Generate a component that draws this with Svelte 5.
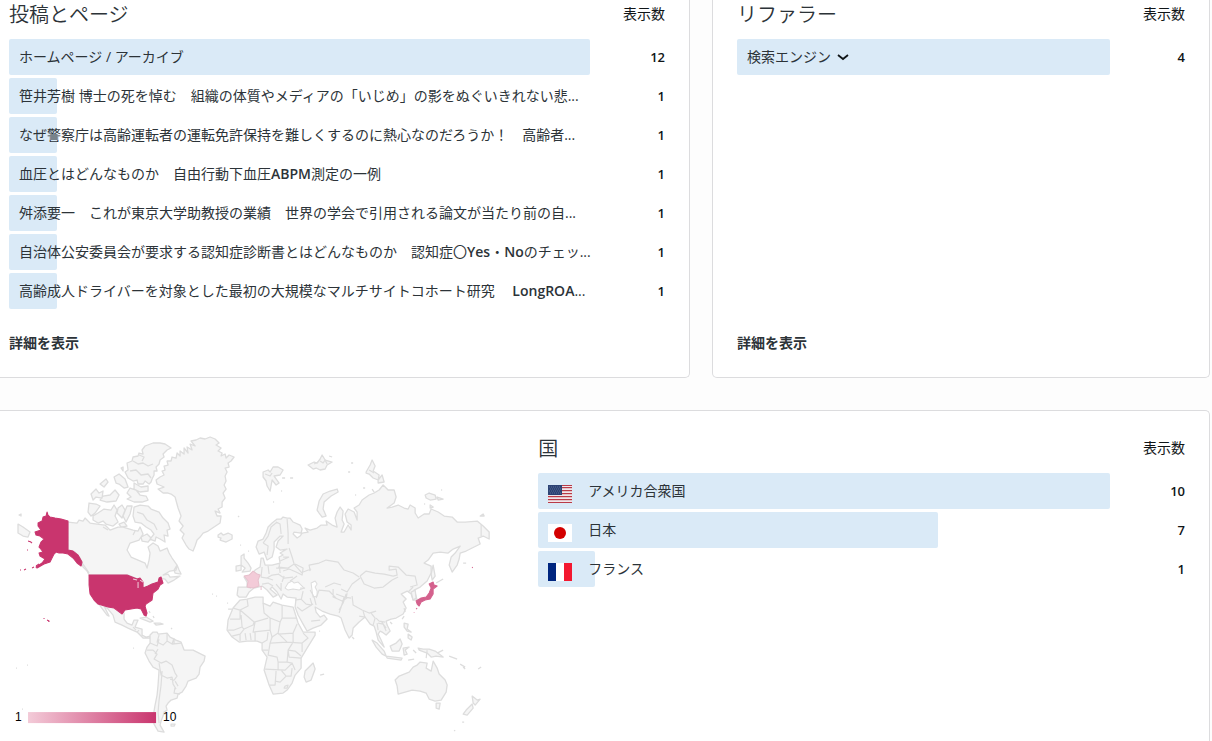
<script lang="ts">
  interface Row {
    label: string
    value: number
    flag?: string
  }

  const posts: Row[] = [
    { label: 'ホームページ / アーカイブ', value: 12 },
    { label: '笹井芳樹 博士の死を悼む　組織の体質やメディアの「いじめ」の影をぬぐいきれない悲...', value: 1 },
    { label: 'なぜ警察庁は高齢運転者の運転免許保持を難しくするのに熱心なのだろうか！　高齢者...', value: 1 },
    { label: '血圧とはどんなものか　自由行動下血圧ABPM測定の一例', value: 1 },
    { label: '舛添要一　これが東京大学助教授の業績　世界の学会で引用される論文が当たり前の自...', value: 1 },
    { label: '自治体公安委員会が要求する認知症診断書とはどんなものか　認知症〇Yes・Noのチェッ...', value: 1 },
    { label: '高齢成人ドライバーを対象とした最初の大規模なマルチサイトコホート研究　 LongROA...', value: 1 },
  ]

  const referrers: Row[] = [{ label: '検索エンジン', value: 4 }]

  const countries: Row[] = [
    { label: 'アメリカ合衆国', value: 10, flag: 'us' },
    { label: '日本', value: 7, flag: 'jp' },
    { label: 'フランス', value: 1, flag: 'fr' },
  ]

  const stripes = [0, 1, 2, 3, 4, 5, 6]

  // landmasses without views
  const land = [
    // Greenland, Iceland
    'M156 480L160 477 164 475 162 471 165 470 164 466 168 465 167 461 171 461 172 457 176 458 177 453 180 456 180 451 184 454 184 448 188 453 187 447 192 450 190 444 195 446 191 441 196 440 200 438 205 439 210 437 215 439 219 443 216 445 221 448 218 451 222 453 221 456 225 454 226 458 229 455 234 457 231 461 228 463 229 467 225 468 227 472 225 476 226 481 224 485 226 489 223 493 225 498 222 502 222 507 218 509 220 513 215 511 217 516 221 516 220 523 214 527 208 531 203 533 200 537 197 540 195 546 193 551 189 549 186 545 182 538 184 534 180 530 183 526 179 521 181 516 178 508 175 497 171 494 168 493 163 493 158 489 164 487 157 484z',
    'M218 535l3-2 2 2 5-2 4 2 0 4-6 3-6-2 1-2-3-1z',
    // Ellesmere, Devon and Axel Heiberg
    'M171 448l-6-4-5-1-7 0-8 3-3 4 1 4-4-1-1 3-5 1-1 4-5 2 1 7-3 2 3 6 5 3 4-1 1 4 5 0 2-3 4 3 2-2 1-3 2-4 0-4 3 0-1-4 3-3 1-4 4-3-1-3 4-4z',
    'M133 461l5 3 5-1 5 3 5-2M130 471l6-1 5 5 7-1 3 4M139 455l5 2-2 4',
    'M130 488l6 2 4 5 6 1 2 4-6 2-8 0-7-3 4-2-4-4zM114 477l5-3 6 5 3 8-4 1-5-4-3-1zM91 494l5-5 3 4 4-2-1 7-6-1-3 3zM100 484l6-5 2 3-4 5zM103 496l7-1 5-5 4 5-3 6-9 1-7-2zM121 468l2-1 0 4zM134 483l7 4 7-1 0 5-8 1-6-3z',
    // Banks, Victoria, Prince of Wales, Baffin
    'M89 503l7 1 4 2-5 7-4 3-3-4zM93 516l5-3 6-4 7 1 3-5 3 5-2 6 3 6-5 4-7-2-3-3-5 2-5-3zM118 508l4-3 3 5-3 8-5-5zM127 506l5 0-2 8-4 8-3-6zM119 524l5-2 3 4-6 1zM134 507l6-2 8 1 3 3 8 3 4 6 5 5 2 6-3 1 1 6-4-1 1 7-5-3-4-2-1 4-5-2 4-5-3-4-5-3-5-4-6-1-2-6zM137 512l6 2 4 6 7 4 3 6M141 537l6-3 4 4-3 4-6-1z',
    // Canada
    'M68 522L77 523 79 520 83 521 85 518 90 523 97 524 105 525 110 530 118 527 123 527 133 530 138 531 140 527 143 534 139 540 130 543 127 550 131 557 138 560 145 563 147 568 149 560 150 553 148 547 153 543 158 546 160 551 167 548 169 553 172 558 177 565 176 570 170 571 163 575 168 574 170 577 180 576 174 580 168 583 165 579 160 578 158 583 152 584 143 588 142 582 138 579 128 575 89 575 87 571 83 567 80 558 75 552 68 550zM174 570l3-5 2 5 2 4-6-1z',
    'M80 560l5 7 4 6M103 527l5 3M135 531l-2 4',
    // Mexico and Central America
    'M98 603L110 606 116 607 120 610 124 613 124 619 127 623 132 625 134 620 138 620 135 627 142 629 142 635 146 637 150 636 150 638 143 638 137 632 128 628 122 625 115 622 113 615 108 609 104 606 109 616 107 615 101 607z',
    'M140 618l6-1 7 4-3 1zM154 623l6 0 3 1-7 1zM149 611l1 2M153 616l1 2M171 628l1 1',
    // South America
    'M150 635L153 632 157 632 158 634 167 633 170 637 176 640 181 642 184 650 193 650 199 653 205 656 204 661 200 667 199 674 196 678 188 681 186 686 182 692 178 694 177 698 171 700 168 703 166 706 167 710 164 712 163 716 161 721 160 725 164 732 158 731 154 724 153 717 155 705 157 695 158 685 159 670 153 667 149 661 145 653 147 647 150 643zM171 724l4 0-1 2-3 0z',
    // Europe and Asia
    'M256 547L258 541 263 539 266 533 268 527 272 523 277 519 281 519 283 517 287 518 290 518 293 522 300 525 302 529 301 533 294 532 293 534 297 538 300 536 302 533 308 532 305 528 310 530 317 528 321 525 327 525 326 521 332 525 337 527 335 518 337 512 340 507 343 511 342 520 344 524 341 532 344 532 348 525 351 530 351 525 347 522 345 514 348 509 354 512 357 520 357 512 354 508 359 505 362 500 369 495 374 493 379 490 383 485 388 490 394 490 396 497 394 503 387 508 392 507 398 505 404 508 408 509 410 505 415 508 415 513 418 518 424 514 429 514 431 509 438 512 444 516 452 517 457 522 465 522 477 521 483 526 489 532 489 539 483 536 478 538 480 544 472 548 466 551 460 553 459 559 457 565 452 572 449 565 451 557 455 553 460 546 453 549 448 553 440 552 433 553 428 560 424 563 431 566 431 573 427 581 420 587 414 590 417 600 413 600 411 594 407 591 401 594 404 597 406 599 403 602 406 608 403 614 396 618 391 619 386 621 387 625 390 631 386 635 382 632 380 631 378 634 381 640 384 647 378 640 376 632 374 626 370 624 365 617 359 622 353 628 352 635 349 638 345 630 341 618 338 616 330 614 322 611 315 607 316 612 320 617 324 615 327 619 321 625 313 628 307 631 303 624 298 615 295 607 296 598 287 597 283 594 281 599 277 592 272 587 270 589 277 595 273 597 267 590 262 586 254 588 249 592 246 597 239 597 237 595 238 587 247 587 247 582 244 577 252 574 255 570 260 567 261 558 263 558 265 565 272 565 280 563 279 557 283 555 280 553 287 549 280 550 276 547 278 541 283 536 280 536 274 542 274 549 272 557 267 560 264 552 259 554z',
    // Britain, Ireland
    'M241 556l3-2 0 4 4 5 3 5-1 3-8 1 3-4-4-3zM236 566l5-1 0 5-5 1z',
    // Svalbard, Franz Josef, Novaya Zemlya, northern islands
    'M263 472l5-2 2 2 3-5 5 0 5 3-3 5-6 1 5 7-3 2-4-5-2 11-3-5-1-5-3-4zM308 465l6-3 3 1 3-4 2-4 3 5 7 2-5 3-2 4-5 1-4-2-3 1zM317 510l2-9 4-7 7-3 7-2 1 3-7 4-7 6-1 7 3 7-4 1-3-4zM366 472l4-7 2-5 3 6-2 5 6 4-1 5-5-2-4-4-3-1zM378 480l4-5 2 7-6 1zM425 495l4-2 6 2 1 4-6 1-4-2zM437 497l6 2-5 1zM430 505l3 2-3 1zM480 516l3-2 1 2z',
    'M314 464l4-2M320 461l3 2 2-3 2 4M265 474l5 2 2-3M369 470l5 3',
    'M290 478l3 0M281 491l1 0M273 502l1 0M238 517l1-1M240 545l1 0M248 551l1 0M351 463l2 0M348 472l2 0M355 495l1 0M441 490l1 0M424 504l1 0M363 488l2 0M372 489l2 3M282 478l3 0M329 456l3 1',
    // Africa, Madagascar
    'M240 600L247 599 255 597 263 597 263 603 270 606 273 602 282 605 293 607 298 623 303 632 315 632 315 635 307 648 301 658 301 668 295 675 292 683 287 690 283 693 273 694 269 685 264 670 267 657 262 650 262 643 257 641 247 641 239 642 232 637 227 630 228 620 233 608z',
    'M305 671l3-3 5-5 2 6-4 11-5 2-2-5z',
    // Indonesia, Philippines, Papua
    'M372 640l5 3 7 8 2 5-4-2-6-7zM386 656l8 1 8 1-1 2-14-2zM390 646l6-3 4-4 2 5-3 7-7 0zM403 648l6-1-4 3 2 4-3 1zM404 623l4 1-1 5 4 3-4-1-3-4zM408 634l4 3-1 3-3-2zM418 648l5 1 6 0 6 2 8 6-7-1-5 1-4-4-8-3zM437 653l6-3M449 656l8 3M413 650l3 3M402 619l2-3M390 622l2 2M408 660l6-1',
    // Australia, New Zealand
    'M395 680L399 676 409 672 413 667 417 665 420 662 427 663 426 668 431 671 433 661 437 668 439 674 445 680 447 685 446 692 441 700 435 701 429 699 426 693 420 691 412 690 405 692 398 694 397 686zM436 703l4 0-1 6-3-1zM472 696l5 4 3-1-5 6-2-2zM472 704l-6 6-3 4 4 1 6-7zM460 664l5 3M463 667l2 2M478 669l3-2M462 722l2 0M454 730l1 1',
    // far east islands and Chukotka
    'M18 524l5 3 7 5-2 5-5-1-5-3zM19 515l2-1 0 2zM433 565l2 11-3 4-1-6zM411 592l4-2 1 8-3 2zM404 608l1 4M436 583l7-4M463 563l3 0M133 648l1 0M16 668l1 0M27 665l1 0M22 709l1 0M212 594l1 0M216 596l1 0M227 603l1 0M228 609l4 0M352 637l2 2M319 631l1 0M320 675l4-1',
  ]

  // country borders
  const borders = [
    'M150 643l7 3 2-7M159 635l-2 7 6 3 4-4 0-7M167 641l5 3 2-6M172 644l9-1M147 650l6 0 4 4-3 5 7 4 5-2 6 4 3 8 2 3-3 4-4-1M159 663l2 12 6 3 5-1 1 7 3 5M162 671l-1 14-2 15-1 12 1 11M175 687l-1 6 6 1M174 644l0-5M155 654l3-5M175 681l3 5M133 627l3 3M139 630l-2 2',
    'M247 599L248 606 240 610 233 608M240 610L240 619 230 619M240 610L254 622 253 625 244 629 242 627 241 615M254 622L268 618M263 603L264 613 270 618 280 622 282 618 282 605M282 618L297 618M270 618L270 630 253 632 255 622M280 622L278 633 272 637 270 630M255 632L255 641M268 632L267 640 262 643M250 633L251 640M245 633L246 640M240 634L240 641M244 629L240 634 232 636M228 630L234 630 242 627',
    'M272 637L270 643 287 642 278 633M270 643L268 655 277 657 278 662 287 662 288 650 293 642 293 633 278 634M293 633L297 624M287 642L302 643 308 638 303 633M302 643L302 652M288 650L295 651 301 656M265 669L285 670 292 663 287 662M278 662L278 670M276 671L275 685 269 685M275 681L280 682 286 676 281 670M286 676L291 676 292 668M288 650L289 657 301 658M285 686L288 685 287 688 284 688zM262 650L268 650M292 663L295 670',
    'M263 543l5-7 3-9 6-5M276 522l4 2 1 10M287 519l1 14 0 11M263 543l5 3-1 9M283 557l6 0M289 548l3 9 2 7-6 4-10-1M283 571l6-2 7 3M278 574l6 4 9-1M262 567l-1 10 6 1 5-3 7-1M267 578l6 2M284 576l-2 6M290 581l7-5M268 566l1 8M279 563l1 10M294 564l8 9M289 557l-9 4M247 587l4 1M262 584l6-1 5 3M276 584l5 6M281 583l0 8M276 568l12 0M296 572l6 3 1-7-8-4M303 572l8-3M310 571l-1-6 10-2 7-3 12 2 6 8 9 3 6 4M300 588l5 0M310 590l4 7 2 8M295 600l6-1 5 5 6 1M297 607l5 4 11-7M301 600l2-9M312 605l-2-7M311 621l9-1M316 598l3-8 10 1 7 7M333 589l0 8 9 4 5-3M325 587l9-4 7 2M336 594l8 3-3 10-2 6M344 597l7 1M346 594l-3 9-4 7M341 589l6 3 5-8 8-6M352 596l1 9 9 5 7 3 7-2M347 593l-1 5M363 611l2 7M359 616l6 1',
    'M360 576l6-5 9 2 9 1 9 2 4-1-1-6-7 1 0-4 9 1 8 8 9 1 2 9-7 2M360 576l4 8 10 4 9-1 9-7 6-3M371 613l4 5-2 7M376 618l3 3 6 1M378 623l5 1 3 7M378 630l-1-7M381 621l5 7M413 587l-5 5M481 524l0 12M427 650l-1 8',
  ]

  // inland seas and lakes, painted over the land
  const water = [
    'M285 588l3-5 4-2 2 2 4-1 3 3 3 3-5 2-6-1-5 1z',
    'M311 583l4-2 2 3-2 3 2 4 0 5-4 1-1-6z',
  ]

  const usa = [
    'M89 575h38l5 2 5 2 3-1 3 4 0 6 5-2 4-2 6-2 1-4 2-1 2 6-3 2-2 4-5 4-1 7-6 4-1 2 2 7-1 3-2-1-3-6-4-1-6 1-6 1-3 4-4-3-4-3-6-1-10-3-4-4-4-6-1-9z',
    'M48 515l2 2 5 1 6 1 7 2v29l5 1 5 4 4 7-1 4-4-3-4-5-5-4-5-1-4 0-3-1-2 2-2 4-2 4-6 2-7 4-1-1 6-4 3-4-5-3-1-3 4-1-3-4-1-1 2-5 3-3-4-3-4-1-1-3 6-2-3-4 0-3 4-2 1-4 3-1 1-4z',
    'M28 541l3 1 1 1M27 550l1 0M39 564l-3 2M34 567l-2 1M26 569l-2 1M21 570l-1 0M44 618l0 1M47 620l2 1 0 1',
  ]

  const japan = 'M433 582l1 3 3 1-4 3 0 5-3 5-5 1-4 2-2 4-2-2-1-3 5-3 5-1 3-4 2-5-2-4z'
  const france = 'M244 576l5-1 4-4 4 3 3 1-2 5 1 6-6 2-6-1 1-6zM261 586l0 4'

  function share(row: Row, rows: Row[]) {
    return (row.value / rows[0].value) * 100
  }

  // odd entries are the runs of Latin letters
  function runs(label: string) {
    return label.split(/([A-Za-z]+)/)
  }
</script>

{#snippet header(title: string)}
  <div class="card-header">
    <h2>{title}</h2>
    <span>表示数</span>
  </div>
{/snippet}

{#snippet flagIcon(code: string)}
  <svg class="flag" viewBox="0 0 24 18" aria-hidden="true">
    <rect width="24" height="18" fill="#fff" />
    {#if code === 'us'}
      <rect width="24" height="18" fill="#f1e6ea" />
      {#each stripes as i}
        <rect y={i === 0 ? 0 : i * 3 - 1} width="24" height={i === 0 ? 1 : 1.2} fill="#b93b48" />
      {/each}
      <rect width="14" height="10" fill="#2c4374" />
      <path d="M1 2h12M2 4h12M1 6h12M2 8h12" stroke="#66779e" stroke-width="0.8" stroke-dasharray="1 1" />
    {:else if code === 'jp'}
      <circle cx="12" cy="9" r="6" fill="#d30000" />
    {:else}
      <rect width="8" height="18" fill="#00267f" />
      <rect x="16" width="8" height="18" fill="#f31830" />
    {/if}
  </svg>
{/snippet}

<main>
  <div class="top">
    <section class="card posts">
      {@render header('投稿とページ')}
      <ul>
        {#each posts as row}
          <li>
            <div class="track">
              <div class="bar" style="width: {share(row, posts)}%"></div>
              <a class="label" href="#post">
                <span>{#each runs(row.label) as run, i}{#if i % 2}<b>{run}</b>{:else}{run}{/if}{/each}</span>
              </a>
            </div>
            <span class="value">{row.value}</span>
          </li>
        {/each}
      </ul>
      <a class="more" href="#posts">詳細を表示</a>
    </section>

    <section class="card">
      {@render header('リファラー')}
      <ul>
        {#each referrers as row}
          <li>
            <div class="track">
              <div class="bar" style="width: {share(row, referrers)}%"></div>
              <button class="label" type="button">
                {row.label}
                <svg class="chevron" viewBox="0 0 12 12" aria-hidden="true">
                  <path d="M1 4l5 4 5-4" fill="none" stroke="currentColor" stroke-width="1.8" />
                </svg>
              </button>
            </div>
            <span class="value">{row.value}</span>
          </li>
        {/each}
      </ul>
      <a class="more" href="#referrers">詳細を表示</a>
    </section>
  </div>

  <section class="card countries">
    <svg class="map" viewBox="9 434 529 307" role="img" aria-label="国">
      <defs>
        <linearGradient id="scale">
          <stop offset="0" stop-color="#f3cbd8" />
          <stop offset="1" stop-color="#c9356e" />
        </linearGradient>
      </defs>
      <g class="land">
        {#each land as d}<path {d} />{/each}
      </g>
      <g class="water">
        {#each water as d}<path {d} />{/each}
      </g>
      <g class="borders">
        {#each borders as d}<path {d} />{/each}
      </g>
      <g class="usa">
        {#each usa as d}<path {d} />{/each}
      </g>
      <path class="lakes" d="M133 579l4 1M138 582l0 6M140 580l3 2" />
      <path class="japan" d={japan} />
      <path class="japan" d="M416 609l1-1M414 612l0 0.5M472 567l0.5 1" />
      <path class="france" d={france} />
      <rect x="28" y="712" width="128" height="11" fill="url(#scale)" />
      <text x="15" y="721">1</text>
      <text x="163" y="721">10</text>
    </svg>

    <div>
      {@render header('国')}
      <ul>
        {#each countries as row}
          <li>
            <div class="track">
              <div class="bar" style="width: {share(row, countries)}%"></div>
              <span class="label">
                {@render flagIcon(row.flag ?? '')}
                {row.label}
              </span>
            </div>
            <span class="value">{row.value}</span>
          </li>
        {/each}
      </ul>
    </div>
  </section>
</main>

<style>
  :global(body) {
    margin: 0;
    background: #fdfdfd;
  }

  main {
    display: flex;
    flex-direction: column;
    gap: 32px;
    padding-right: 2px;
    font-family: 'Open Sans', 'Noto Sans CJK JP', sans-serif;
    font-size: 14px;
    line-height: 20px;
    color: #2c3338;
  }

  .top {
    display: grid;
    grid-template-columns: minmax(0, 115fr) minmax(0, 83fr);
    gap: 22px;
  }

  .card {
    display: flex;
    flex-direction: column;
    box-sizing: border-box;
    padding: 0 24px 24px;
    background: #fff;
    border: 1px solid #dcdcde;
    border-top: 0;
    border-radius: 0 0 5px 5px;
  }

  .posts {
    padding-left: 9px;
    border-left: 0;
    border-radius: 0 0 5px 0;
  }

  .countries {
    display: grid;
    grid-template-columns: minmax(0, 45fr) minmax(0, 55fr);
    padding: 23px 24px 0 9px;
    border-top: 1px solid #dcdcde;
    border-bottom: 0;
    border-left: 0;
    border-radius: 0 5px 0 0;
  }

  .card-header {
    display: flex;
    align-items: center;
    justify-content: space-between;
    height: 28px;
    margin-bottom: 11px;
    color: #101517;
  }

  h2 {
    margin: 0;
    padding-top: 2px;
    font-size: 20px;
    font-weight: 350;
    line-height: 28px;
    color: #2c3338;
  }

  ul {
    display: flex;
    flex-direction: column;
    gap: 3px;
    margin: 0;
    padding: 0;
    list-style: none;
  }

  li {
    display: flex;
    align-items: center;
    height: 36px;
  }

  .track {
    display: grid;
    flex: 1;
    min-width: 0;
    height: 36px;
  }

  .bar,
  .label {
    grid-area: 1 / 1;
  }

  .bar {
    background: #daeaf7;
    border-radius: 2px;
  }

  .label {
    display: flex;
    align-items: center;
    z-index: 1;
    min-width: 0;
    padding: 0 0 0 10px;
    font: inherit;
    color: inherit;
    text-align: left;
    text-decoration: none;
    white-space: nowrap;
    background: none;
    border: 0;
  }

  .label b {
    font-weight: 600;
  }

  .value {
    width: 75px;
    font-weight: 600;
    font-size: 13px;
    text-align: right;
    color: #101517;
  }

  .more {
    align-self: flex-start;
    margin-top: auto;
    font-weight: 700;
    color: inherit;
    text-decoration: none;
  }

  .posts .more {
    margin-top: 24px;
  }

  .chevron {
    width: 12px;
    height: 12px;
    margin-left: 6px;
    color: #101517;
  }

  .flag {
    align-self: flex-end;
    width: 24px;
    height: 18px;
    margin: 0 16px 6px 0;
  }

  .map {
    display: block;
    width: 100%;
    stroke-linejoin: round;
  }

  .land {
    fill: #f5f5f5;
    stroke: #dddddd;
    stroke-width: 1.3;
  }

  .water {
    fill: #ffffff;
    stroke: #dddddd;
  }

  .borders {
    fill: none;
    stroke: #dddddd;
    stroke-width: 1.2;
  }

  .usa {
    fill: #c9356e;
    stroke: #c9356e;
  }

  .lakes {
    fill: none;
    stroke: #f0d0dc;
  }

  .japan {
    fill: #d4618d;
    stroke: #d4618d;
  }

  .france {
    fill: #f3cbd8;
    stroke: #e6c0cc;
  }

  .map text {
    font-family: 'Liberation Sans', sans-serif;
    font-size: 12px;
    fill: #000000;
  }
</style>
